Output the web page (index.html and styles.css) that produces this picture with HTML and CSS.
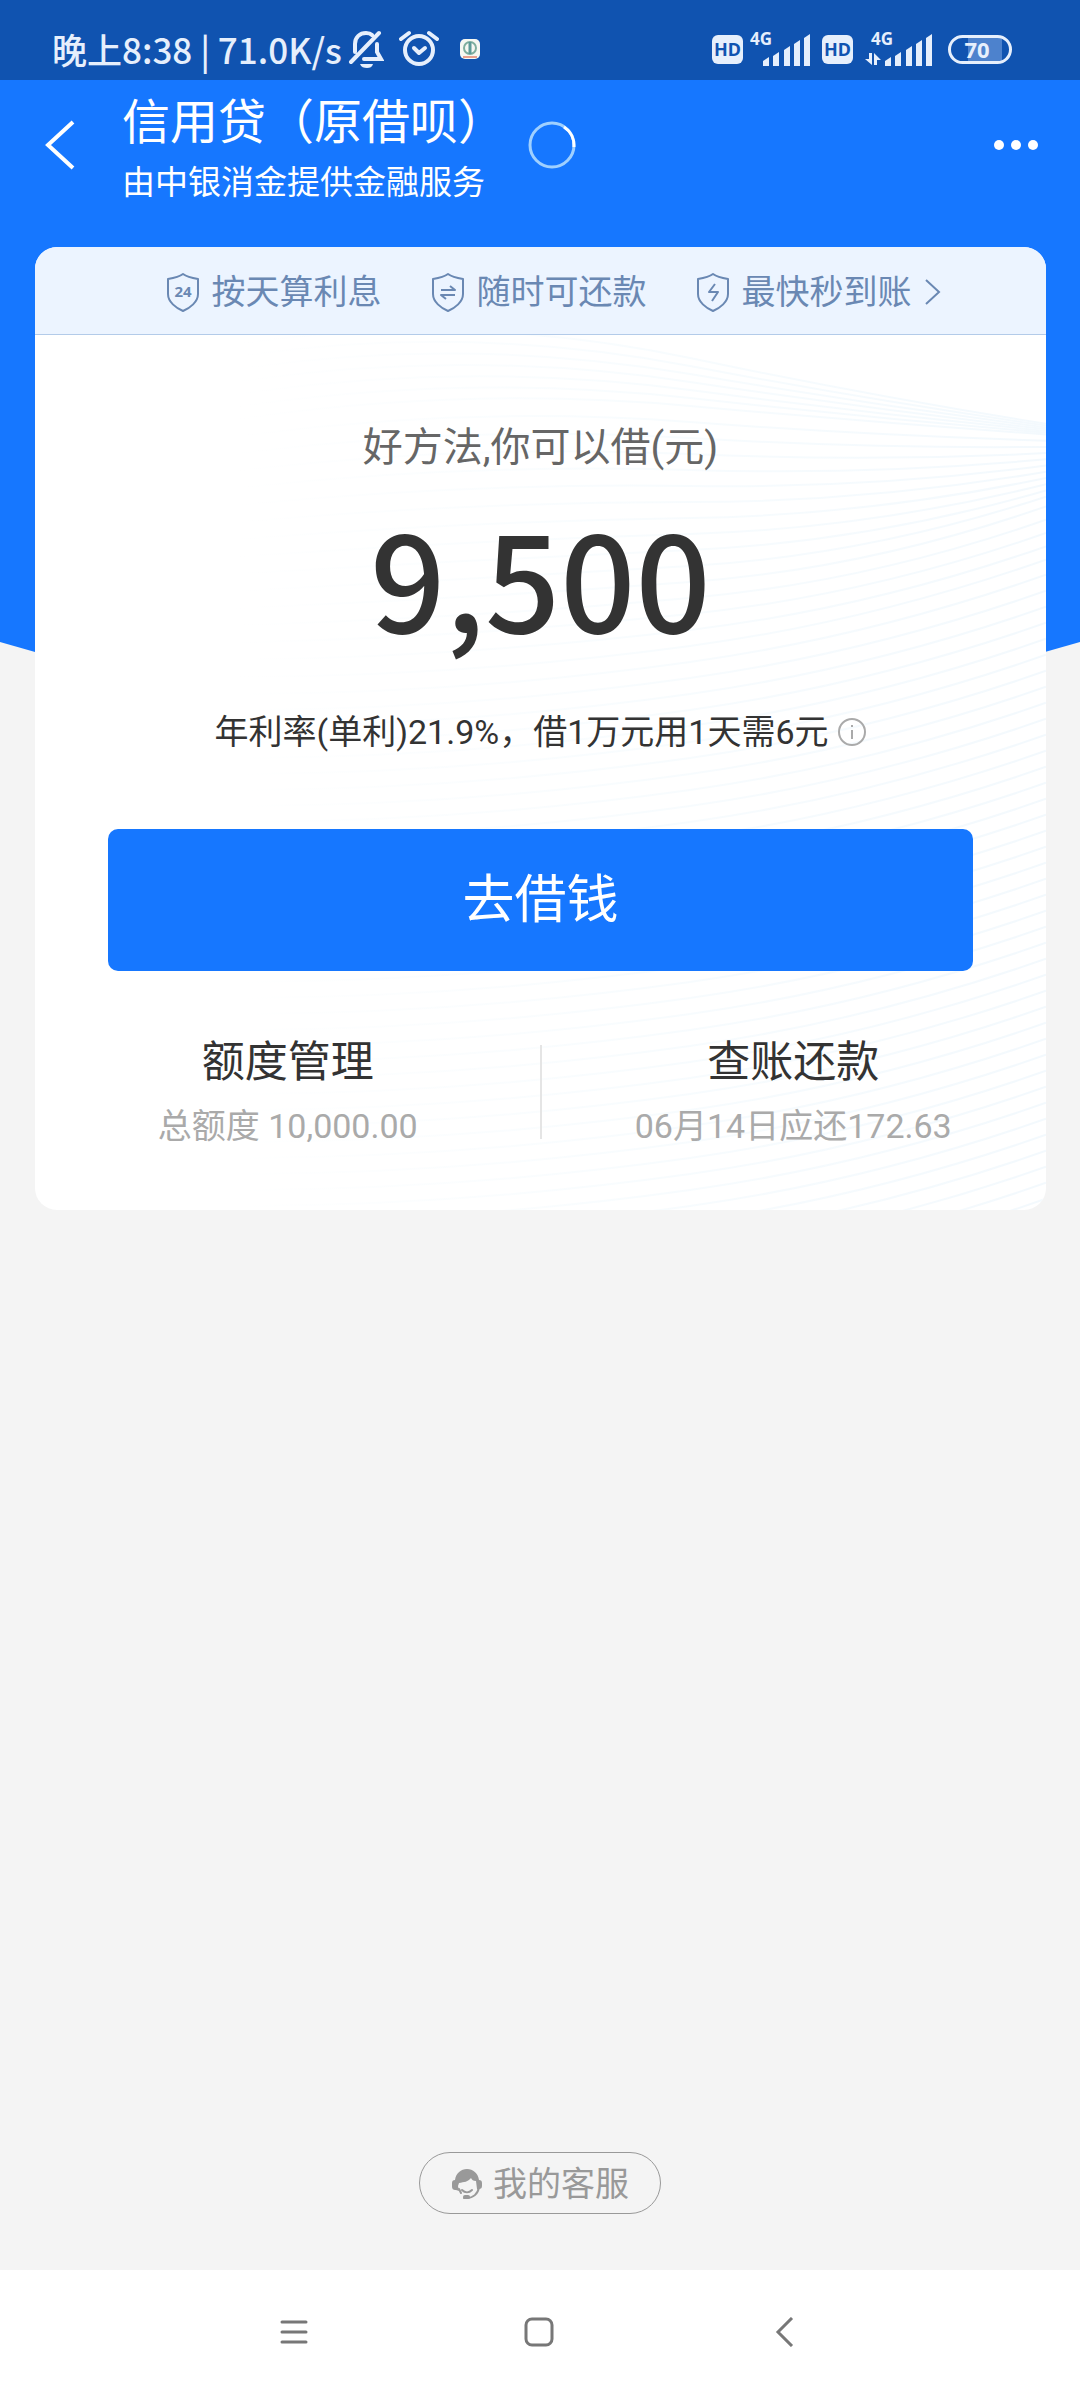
FILE: index.html
```html
<!DOCTYPE html>
<html lang="zh-CN">
<head>
<meta charset="utf-8">
<meta name="viewport" content="width=device-width, initial-scale=1">
<title>信用贷（原借呗）</title>
<link rel="stylesheet" href="styles.css">
</head>
<body>
<div class="status">
  <div class="status-group">
    <span class="status-text">晚上8:38 | 71.0K/s</span>
    <svg class="bell" width="36" height="38" viewBox="0 0 36 38" fill="none" stroke="currentColor" stroke-width="4" stroke-linecap="round" aria-hidden="true">
      <path d="M7 22V14C7 7 12 3 18 3c2 0 4 0 6 2M29 14v8l4 7H16M31 3 3 32"/>
      <path d="M12 34h13c-1 3-3 4-6 4s-6-1-7-4z" fill="currentColor" stroke="none"/>
    </svg>
    <svg class="alarm" width="40" height="38" viewBox="0 0 40 38" fill="none" stroke="currentColor" stroke-width="4" stroke-linecap="round" aria-hidden="true">
      <circle cx="20" cy="20" r="14"/>
      <path d="M2 9l8-6M38 9l-8-6"/>
      <path d="M15 18l5 5 6-5" stroke-linejoin="round"/>
    </svg>
    <svg width="20" height="20" viewBox="0 0 20 20" fill="none" aria-hidden="true">
      <rect width="20" height="20" rx="5" fill="#f6f8f2"/>
      <circle cx="10" cy="9" r="6" stroke="#7fae9e" stroke-width="2"/>
      <path d="M10 3v12" stroke="#5c9a98" stroke-width="3"/>
      <path d="M3 18h14" stroke="#e9a08c" stroke-width="2"/>
    </svg>
  </div>
  <div class="status-group">
    <span class="hd">HD</span>
    <svg class="signal" width="61" height="54" viewBox="0 -10 61 54" fill="currentColor" aria-hidden="true">
      <text x="0" y="13" class="net">4G</text>
      <path d="M13 29l6-4v9h-6zM23 24l6-4v14h-6zM34 18l6-4v20h-6zM44 12l6-4v26h-6zM54 6l6-4v32h-6z"/>
    </svg>
    <span class="hd">HD</span>
    <svg class="signal wide" width="68" height="54" viewBox="0 -10 68 54" fill="currentColor" aria-hidden="true">
      <text x="6" y="13" class="net">4G</text>
      <path d="M4 21h3v12L0 27h4zM9 33V21l7 7h-4v5z"/>
      <path d="M20 29l6-4v9h-6zM30 24l6-4v14h-6zM41 18l6-4v20h-6zM51 12l6-4v26h-6zM61 6l6-4v32h-6z"/>
    </svg>
    <span class="battery">70</span>
  </div>
</div>

<header class="bar">
  <button class="icon-btn" aria-label="返回">
    <svg width="30" height="50" viewBox="0 0 30 50" fill="none" stroke="currentColor" stroke-width="4" aria-hidden="true"><path d="M28 2 3 25l25 23"/></svg>
  </button>
  <div class="titles">
    <h1>信用贷（原借呗）</h1>
    <p>由中银消金提供金融服务</p>
  </div>
  <svg class="spinner" width="48" height="48" viewBox="0 0 48 48" fill="none" stroke-width="3" aria-hidden="true">
    <circle cx="24" cy="24" r="22" stroke="#9fd0ff"/>
    <path d="M36 6A22 22 0 0 1 46 26" stroke="#fff"/>
  </svg>
  <button class="icon-btn more" aria-label="更多">
    <svg width="46" height="12" viewBox="0 0 46 12" fill="currentColor" aria-hidden="true"><circle cx="6" cy="6" r="5"/><circle cx="23" cy="6" r="5"/><circle cx="40" cy="6" r="5"/></svg>
  </button>
</header>

<main>
  <div class="backdrop"></div>
  <section class="card">
    <div class="tips">
      <span class="tip">
        <svg width="32" height="40" viewBox="0 0 32 40" fill="none" stroke="currentColor" stroke-width="2" stroke-linejoin="round" aria-hidden="true"><path d="M16 2c4 3 9 4 15 5v15c0 8-8 14-15 17C9 36 1 30 1 22V7c6-1 11-2 15-5z"/><text x="16" y="25" class="shield-num">24</text></svg>
        按天算利息
      </span>
      <span class="tip">
        <svg width="32" height="40" viewBox="0 0 32 40" fill="none" stroke="currentColor" stroke-width="2" stroke-linejoin="round" aria-hidden="true"><path d="M16 2c4 3 9 4 15 5v15c0 8-8 14-15 17C9 36 1 30 1 22V7c6-1 11-2 15-5z"/><path d="M9 18h14l-5-4M23 23H9l5 4"/></svg>
        随时可还款
      </span>
      <a class="tip" href="#tips">
        <svg width="32" height="40" viewBox="0 0 32 40" fill="none" stroke="currentColor" stroke-width="2" stroke-linejoin="round" aria-hidden="true"><path d="M16 2c4 3 9 4 15 5v15c0 8-8 14-15 17C9 36 1 30 1 22V7c6-1 11-2 15-5z"/><path d="M18 12l-6 8h9l-6 9"/></svg>
        最快秒到账
        <svg width="16" height="26" viewBox="0 0 16 26" fill="none" stroke="currentColor" stroke-width="2" aria-hidden="true"><path d="M1 1l13 12L1 25"/></svg>
      </a>
    </div>
    <div class="body">
      <svg class="waves" viewBox="0 0 1011 875" preserveAspectRatio="none" fill="none" aria-hidden="true">
        <defs>
          <linearGradient id="fade" gradientUnits="userSpaceOnUse" x1="200" y1="0" x2="1011" y2="0">
            <stop offset="0" stop-color="#fff"/>
            <stop offset="0.5" stop-color="#f8fcfe"/>
            <stop offset="1" stop-color="#f3f9fd"/>
          </linearGradient>
        </defs>
        <g id="wave-lines" stroke="url(#fade)" stroke-width="2"></g>
      </svg>
      <div class="content">
        <p class="lead">好方法,你可以借(元)</p>
        <p class="amount">9,500</p>
        <p class="rate">年利率(单利)21.9%，借1万元用1天需6元
          <svg width="30" height="30" viewBox="0 0 30 30" fill="none" stroke="#aaa" stroke-width="2" role="img" aria-label="说明"><circle cx="15" cy="15" r="13"/><path d="M15 13v9M15 8v2"/></svg>
        </p>
        <button class="primary">去借钱</button>
        <nav class="links">
          <a href="#quota"><strong>额度管理</strong><span>总额度 10,000.00</span></a>
          <a href="#bill"><strong>查账还款</strong><span>06月14日应还172.63</span></a>
        </nav>
      </div>
    </div>
  </section>
</main>

<footer class="service">
  <button class="pill">
    <svg width="32" height="32" viewBox="0 0 32 32" fill="none" aria-hidden="true">
      <path d="M4 12C5 5 10 1 16 1s11 4 12 11c2 0 3 1 3 3v3c0 2-1 3-3 3h-2l-1-8c-3 0-4-1-5-3-3 4-7 4-12 5l-1 3 1 5-3-1c-3 0-4-1-4-4v-3c0-2 1-3 3-3z" fill="currentColor"/>
      <path d="M28 19c-1 7-6 11-12 11h-3M8 21l2 4M11 22c3 3 7 3 10 0" stroke="currentColor" stroke-width="2" stroke-linecap="round"/>
      <rect x="12" y="27" width="7" height="4" rx="2" fill="currentColor"/>
    </svg>
    我的客服
  </button>
</footer>

<nav class="system" aria-label="系统导航">
  <button aria-label="最近任务"><svg width="30" height="30" viewBox="0 0 30 30" stroke="currentColor" stroke-width="3" stroke-linecap="round" fill="none"><path d="M3 5h24M3 15h24M3 25h24"/></svg></button>
  <button aria-label="主屏幕"><svg width="30" height="30" viewBox="0 0 30 30" stroke="currentColor" stroke-width="3" fill="none"><rect x="2" y="2" width="26" height="26" rx="6"/></svg></button>
  <button aria-label="返回上一页"><svg width="30" height="30" viewBox="0 0 30 30" stroke="currentColor" stroke-width="3" fill="none"><path d="M23 1 9 15l14 14"/></svg></button>
</nav>
<script src="waves.js"></script>
</body>
</html>
```
FILE: styles.css
```css
* { box-sizing: border-box; }

body {
  margin: 0;
  min-height: 100vh;
  display: flex;
  flex-direction: column;
  background: #f4f4f4;
  color: #333;
  font-family: Roboto, "Noto Sans CJK SC", sans-serif;
  font-size: 34px;
  line-height: 48px;
}

h1, p { margin: 0; font-weight: 400; }

button {
  padding: 0;
  border: 0;
  background: none;
  color: inherit;
  font: inherit;
}

a { color: inherit; text-decoration: none; }
svg { display: block; flex: none; }

/* Status bar */
.status {
  height: 80px;
  padding: 20px 68px 0 52px;
  display: flex;
  justify-content: space-between;
  background: #1053b0;
  color: #e6effc;
}

.status-group { display: flex; align-items: center; height: 58px; }

.status-text {
  font-family: "Noto Sans CJK SC", sans-serif;
  font-size: 35px;
  font-weight: 500;
  white-space: nowrap;
}

.bell { margin: 0 15px 0 6px; }
.alarm { margin-right: 21px; }

.hd {
  width: 31px;
  height: 29px;
  border-radius: 6px;
  background: #e6effc;
  color: #1053b0;
  font: 700 18px/29px "Noto Sans", sans-serif;
  text-align: center;
}

.signal { margin: 0 11px 0 7px; }
.signal.wide { margin: 0 15px 0 12px; }
.net { font: 700 17px "Noto Sans", sans-serif; }

.battery {
  width: 64px;
  height: 29px;
  padding-right: 6px;
  border: 3px solid #e6effc;
  border-radius: 15px;
  background: linear-gradient(90deg, #1053b0 30%, #4d82cd 30%, #4d82cd 88%, #1053b0 88%);
  font: 700 22px/23px "Noto Sans", sans-serif;
  text-align: center;
}

/* Title bar */
.bar {
  height: 130px;
  padding: 0 41px 0 45px;
  display: flex;
  align-items: center;
  background: #1677ff;
  color: #fff;
}

.titles { margin: 0 22px 0 47px; padding-top: 8px; }
.titles h1 { font-size: 48px; line-height: 68px; }
.titles p { font-size: 33px; line-height: 52px; }
.more { margin-left: auto; }

/* Card over the blue backdrop */
main { display: grid; }
.backdrop, .card { grid-area: 1 / 1; }

.backdrop {
  height: 590px;
  background: #1677ff;
  clip-path: polygon(0 0, 100% 0, 100% 432px, 50% 586px, 0 432px);
}

.card {
  margin: 37px 34px 0 35px;
  border-radius: 22px;
  background: #fff;
  overflow: hidden;
  position: relative;
}

.tips {
  height: 88px;
  padding: 2px 0 0 26px;
  display: flex;
  align-items: center;
  justify-content: center;
  gap: 50px;
  border-bottom: 1px solid #b3cbe9;
  background: #ecf4ff;
  color: #6a88b3;
}

.tip { display: flex; align-items: center; gap: 13px; white-space: nowrap; }

.shield-num {
  fill: currentColor;
  stroke: none;
  font: 700 15px "Noto Sans", sans-serif;
  text-anchor: middle;
}

.body { display: grid; }
.waves, .content { grid-area: 1 / 1; }
.waves { width: 100%; height: 100%; }

.content {
  min-width: 0;
  padding: 83px 0 59px;
  text-align: center;
}

.lead { font-size: 40px; line-height: 60px; color: #666; }

.amount {
  margin-top: 28px;
  font-family: "Noto Sans CJK SC", sans-serif;
  font-size: 132px;
  font-weight: 500;
  line-height: 140px;
}

.rate {
  margin: 62px 0 73px;
  display: flex;
  align-items: center;
  justify-content: center;
  gap: 8px;
}

.primary {
  width: calc(100% - 146px);
  height: 142px;
  padding-top: 2px;
  border-radius: 10px;
  background: #1677ff;
  color: #fff;
  font-size: 52px;
}

.links {
  margin-top: 63px;
  display: grid;
  grid-template-columns: 1fr 1fr;
  background: linear-gradient(#e5e5e5, #e5e5e5) center / 2px 94px no-repeat;
}

.links a { display: flex; flex-direction: column; gap: 12px; }
.links strong { font-size: 43px; line-height: 56px; font-weight: 400; }
.links span { color: #aaa; }

/* Customer service */
.service {
  margin-top: auto;
  padding-bottom: 56px;
  display: flex;
  justify-content: center;
}

.pill {
  height: 62px;
  padding: 2px 31px 0;
  display: flex;
  align-items: center;
  gap: 10px;
  border: 1px solid #999;
  border-radius: 31px;
  color: #999;
}

/* System navigation */
.system {
  height: 130px;
  padding: 0 3px 6px 0;
  display: flex;
  align-items: center;
  justify-content: center;
  gap: 185px;
  background: #fff;
  color: #777;
}

.system button { width: 60px; height: 60px; display: grid; place-items: center; }
```
FILE: waves.js
```js
// Fan of thin lines that draw together near the card's right edge.
const group = document.getElementById("wave-lines");
for (let i = 0; i < 64; i++) {
  const near = Math.min(i, 6);
  const far = Math.max(0, i - 6);
  const y = 23 + near * 8 + far * 16;
  // slopes at the left end, the middle knot and the right end
  const a = Math.min(0, -0.15 + far * 0.01);
  const m = far ? Math.max(-0.14, 0.09 - far * 0.015) : 0.21 - near * 0.02;
  const b = far ? Math.max(-0.35, 0.07 - far * 0.04) : 0.16 - near * 0.015;
  const left = y - 455 * (a + m) / 2;
  const right = y + 356 * (m + b) / 2;
  const path = document.createElementNS("http://www.w3.org/2000/svg", "path");
  path.setAttribute("d",
    `M200 ${left} C350 ${left + 150 * a} 505 ${y - 150 * m} 655 ${y}` +
    ` C775 ${y + 120 * m} 891 ${right - 120 * b} 1011 ${right}`);
  group.appendChild(path);
}
```
